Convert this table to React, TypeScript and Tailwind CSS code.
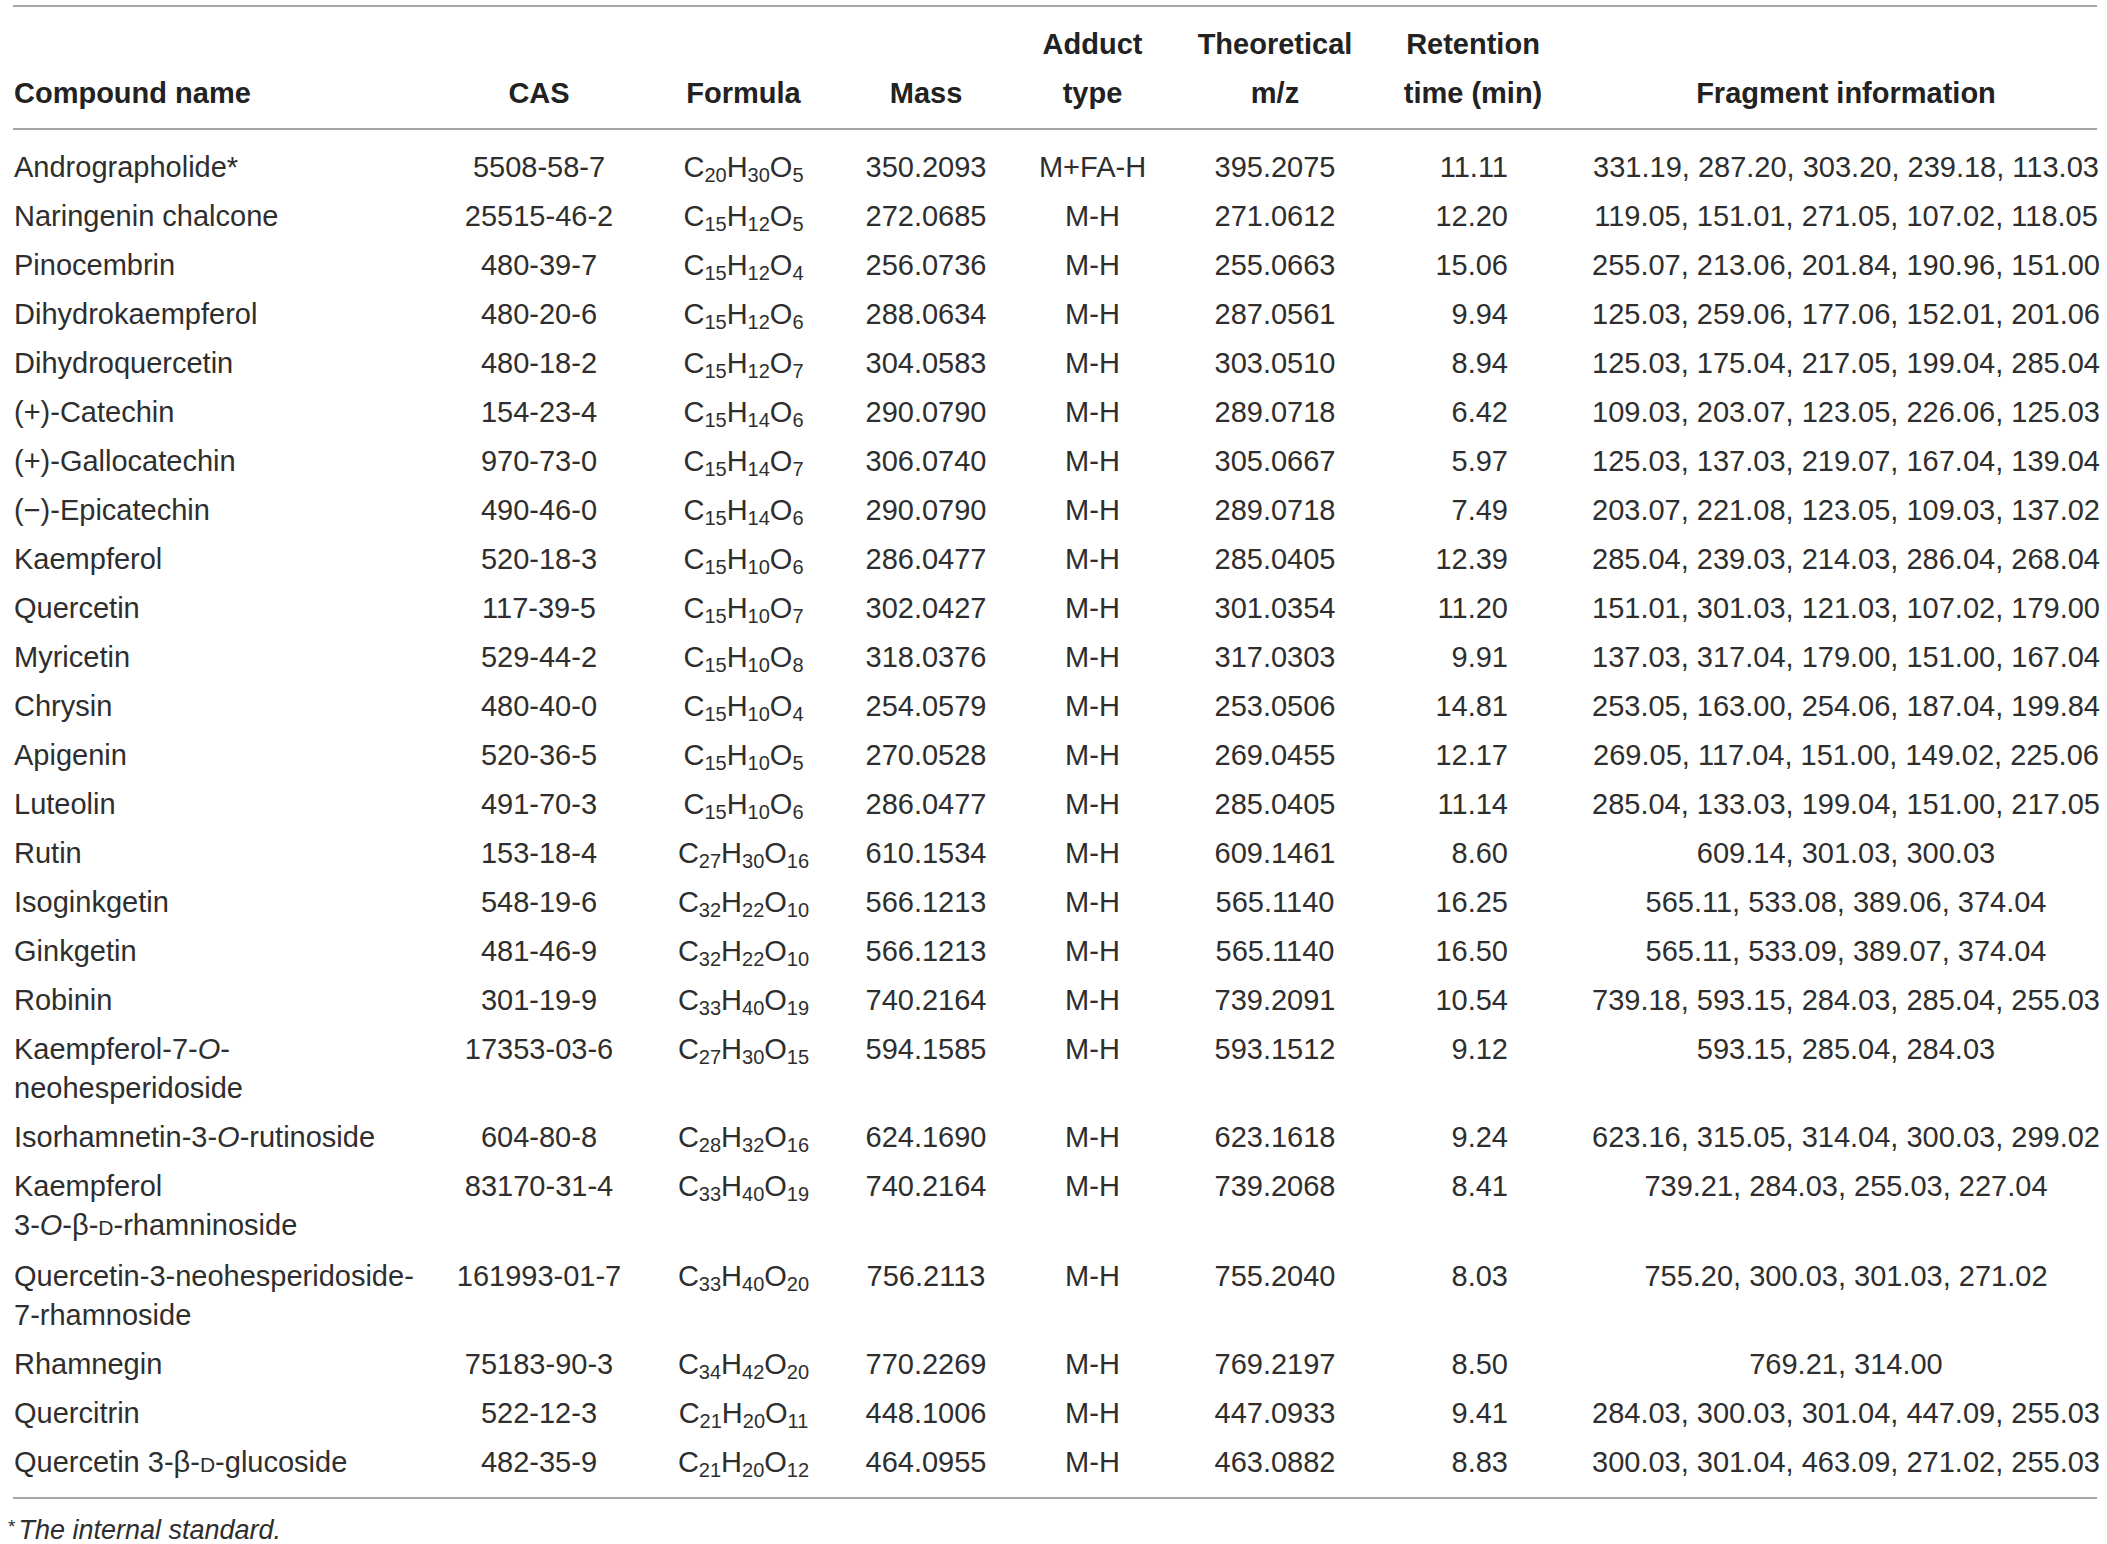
import React from "react";

type Row = {
  name: React.ReactNode;
  cas: string;
  formula: string;
  mass: string;
  adduct: string;
  mz: string;
  rt: string;
  frag: string;
};

const D = () => <span className="text-[21px]">D</span>;

const rows: Row[] = [
  { name: "Andrographolide*", cas: "5508-58-7", formula: "C20H30O5", mass: "350.2093", adduct: "M+FA-H", mz: "395.2075", rt: "11.11", frag: "331.19, 287.20, 303.20, 239.18, 113.03" },
  { name: "Naringenin chalcone", cas: "25515-46-2", formula: "C15H12O5", mass: "272.0685", adduct: "M-H", mz: "271.0612", rt: "12.20", frag: "119.05, 151.01, 271.05, 107.02, 118.05" },
  { name: "Pinocembrin", cas: "480-39-7", formula: "C15H12O4", mass: "256.0736", adduct: "M-H", mz: "255.0663", rt: "15.06", frag: "255.07, 213.06, 201.84, 190.96, 151.00" },
  { name: "Dihydrokaempferol", cas: "480-20-6", formula: "C15H12O6", mass: "288.0634", adduct: "M-H", mz: "287.0561", rt: "9.94", frag: "125.03, 259.06, 177.06, 152.01, 201.06" },
  { name: "Dihydroquercetin", cas: "480-18-2", formula: "C15H12O7", mass: "304.0583", adduct: "M-H", mz: "303.0510", rt: "8.94", frag: "125.03, 175.04, 217.05, 199.04, 285.04" },
  { name: "(+)-Catechin", cas: "154-23-4", formula: "C15H14O6", mass: "290.0790", adduct: "M-H", mz: "289.0718", rt: "6.42", frag: "109.03, 203.07, 123.05, 226.06, 125.03" },
  { name: "(+)-Gallocatechin", cas: "970-73-0", formula: "C15H14O7", mass: "306.0740", adduct: "M-H", mz: "305.0667", rt: "5.97", frag: "125.03, 137.03, 219.07, 167.04, 139.04" },
  { name: "(\u2212)-Epicatechin", cas: "490-46-0", formula: "C15H14O6", mass: "290.0790", adduct: "M-H", mz: "289.0718", rt: "7.49", frag: "203.07, 221.08, 123.05, 109.03, 137.02" },
  { name: "Kaempferol", cas: "520-18-3", formula: "C15H10O6", mass: "286.0477", adduct: "M-H", mz: "285.0405", rt: "12.39", frag: "285.04, 239.03, 214.03, 286.04, 268.04" },
  { name: "Quercetin", cas: "117-39-5", formula: "C15H10O7", mass: "302.0427", adduct: "M-H", mz: "301.0354", rt: "11.20", frag: "151.01, 301.03, 121.03, 107.02, 179.00" },
  { name: "Myricetin", cas: "529-44-2", formula: "C15H10O8", mass: "318.0376", adduct: "M-H", mz: "317.0303", rt: "9.91", frag: "137.03, 317.04, 179.00, 151.00, 167.04" },
  { name: "Chrysin", cas: "480-40-0", formula: "C15H10O4", mass: "254.0579", adduct: "M-H", mz: "253.0506", rt: "14.81", frag: "253.05, 163.00, 254.06, 187.04, 199.84" },
  { name: "Apigenin", cas: "520-36-5", formula: "C15H10O5", mass: "270.0528", adduct: "M-H", mz: "269.0455", rt: "12.17", frag: "269.05, 117.04, 151.00, 149.02, 225.06" },
  { name: "Luteolin", cas: "491-70-3", formula: "C15H10O6", mass: "286.0477", adduct: "M-H", mz: "285.0405", rt: "11.14", frag: "285.04, 133.03, 199.04, 151.00, 217.05" },
  { name: "Rutin", cas: "153-18-4", formula: "C27H30O16", mass: "610.1534", adduct: "M-H", mz: "609.1461", rt: "8.60", frag: "609.14, 301.03, 300.03" },
  { name: "Isoginkgetin", cas: "548-19-6", formula: "C32H22O10", mass: "566.1213", adduct: "M-H", mz: "565.1140", rt: "16.25", frag: "565.11, 533.08, 389.06, 374.04" },
  { name: "Ginkgetin", cas: "481-46-9", formula: "C32H22O10", mass: "566.1213", adduct: "M-H", mz: "565.1140", rt: "16.50", frag: "565.11, 533.09, 389.07, 374.04" },
  { name: "Robinin", cas: "301-19-9", formula: "C33H40O19", mass: "740.2164", adduct: "M-H", mz: "739.2091", rt: "10.54", frag: "739.18, 593.15, 284.03, 285.04, 255.03" },
  {
    name: (
      <>
        Kaempferol-7-<i>O</i>-<br />neohesperidoside
      </>
    ),
    cas: "17353-03-6", formula: "C27H30O15", mass: "594.1585", adduct: "M-H", mz: "593.1512", rt: "9.12", frag: "593.15, 285.04, 284.03",
  },
  {
    name: (
      <>
        Isorhamnetin-3-<i>O</i>-rutinoside
      </>
    ),
    cas: "604-80-8", formula: "C28H32O16", mass: "624.1690", adduct: "M-H", mz: "623.1618", rt: "9.24", frag: "623.16, 315.05, 314.04, 300.03, 299.02",
  },
  {
    name: (
      <>
        Kaempferol
        <br />
        3-<i>O</i>-β-<D />-rhamninoside
      </>
    ),
    cas: "83170-31-4", formula: "C33H40O19", mass: "740.2164", adduct: "M-H", mz: "739.2068", rt: "8.41", frag: "739.21, 284.03, 255.03, 227.04",
  },
  {
    name: (
      <>
        Quercetin-3-neohesperidoside-
        <br />
        7-rhamnoside
      </>
    ),
    cas: "161993-01-7", formula: "C33H40O20", mass: "756.2113", adduct: "M-H", mz: "755.2040", rt: "8.03", frag: "755.20, 300.03, 301.03, 271.02",
  },
  { name: "Rhamnegin", cas: "75183-90-3", formula: "C34H42O20", mass: "770.2269", adduct: "M-H", mz: "769.2197", rt: "8.50", frag: "769.21, 314.00" },
  { name: "Quercitrin", cas: "522-12-3", formula: "C21H20O11", mass: "448.1006", adduct: "M-H", mz: "447.0933", rt: "9.41", frag: "284.03, 300.03, 301.04, 447.09, 255.03" },
  {
    name: (
      <>
        Quercetin 3-β-<D />-glucoside
      </>
    ),
    cas: "482-35-9", formula: "C21H20O12", mass: "464.0955", adduct: "M-H", mz: "463.0882", rt: "8.83", frag: "300.03, 301.04, 463.09, 271.02, 255.03",
  },
];

function Formula({ f }: { f: string }) {
  const parts = f.match(/[A-Z][a-z]?|\d+/g) || [];
  return (
    <>
      {parts.map((p, i) =>
        /\d/.test(p) ? (
          <sub key={i} className="text-[20px]">
            {p}
          </sub>
        ) : (
          <span key={i}>{p}</span>
        )
      )}
    </>
  );
}

const cols =
  "grid grid-cols-[417px_218px_191px_174px_159px_206px_190px_539px] w-[2094px]";

export default function App() {
  return (
    <div
      className="w-[2107px] h-[1544px] overflow-hidden bg-white text-[#2e2e2e] pl-[13px] pt-[5px]"
      style={{ fontFamily: '"Liberation Sans", Arial, sans-serif' }}
    >
      <div className="w-[2084px] border-t-2 border-b-2 border-[#a6a6a6]">
        <div
          className={`${cols} items-end pt-[13px] pb-[10px] text-[29px] leading-[49px] font-bold text-[#222]`}
        >
          <div className="pl-[1px] whitespace-nowrap">Compound name</div>
          <div className="text-center">CAS</div>
          <div className="text-center">Formula</div>
          <div className="text-center">Mass</div>
          <div className="text-center">
            Adduct
            <br />
            type
          </div>
          <div className="text-center">
            Theoretical
            <br />
            m/z
          </div>
          <div className="text-center whitespace-nowrap">
            Retention
            <br />
            time (min)
          </div>
          <div className="text-center pl-[17px]">Fragment information</div>
        </div>
      </div>
      <div className="w-[2084px] border-b-2 border-[#a6a6a6]">
        <div className={`${cols} pt-[13px] pb-[8px] text-[29px] leading-[39px]`}>
          {rows.map((r, i) => (
            <React.Fragment key={i}>
              <div className="pl-[1px] py-[5px] whitespace-nowrap">{r.name}</div>
              <div className="text-center py-[5px]">{r.cas}</div>
              <div className="text-center py-[5px] whitespace-nowrap">
                <Formula f={r.formula} />
              </div>
              <div className="text-center py-[5px]">{r.mass}</div>
              <div className="text-center py-[5px]">{r.adduct}</div>
              <div className="text-center py-[5px]">{r.mz}</div>
              <div className="text-right pr-[60px] py-[5px]">{r.rt}</div>
              <div className="text-center pl-[17px] py-[5px] whitespace-nowrap">{r.frag}</div>
            </React.Fragment>
          ))}
        </div>
      </div>
      <div className="-ml-[5px] pt-[15px] text-[27px] leading-[26px] whitespace-nowrap">
        <span className="text-[19px] align-[6px] mr-[3px]">*</span>
        <i>The internal standard.</i>
      </div>
    </div>
  );
}
